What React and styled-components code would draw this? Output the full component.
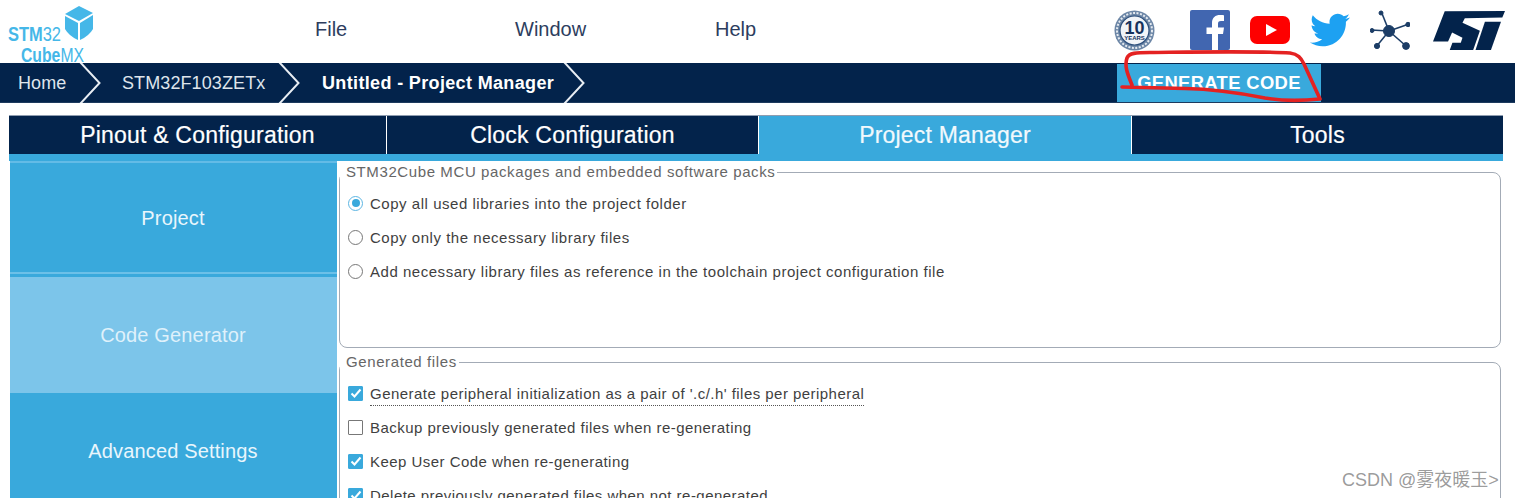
import React from "react";
import styled, { createGlobalStyle } from "styled-components";
import { FaTwitter } from "react-icons/fa";

const Global = createGlobalStyle`
  html, body { margin: 0; padding: 0; background: #fff; overflow: hidden; }
  * { box-sizing: border-box; }
`;

const Page = styled.div`
  position: relative;
  width: 1515px;
  height: 498px;
  overflow: hidden;
  font-family: "Liberation Sans", Arial, sans-serif;
  background: #fff;
`;

const Header = styled.header`
  height: 63px;
  display: flex;
  align-items: flex-start;
  padding-right: 10px;
`;

const LogoBox = styled.div`
  width: 315px;
  height: 63px;
  flex: none;
  display: flex;
  padding: 3px 0 0 7px;
`;

const Menu = styled.nav`
  display: flex;
  height: 59px;
  align-items: center;
`;

const MenuItem = styled.span`
  width: 200px;
  font-size: 20px;
  color: #2d3d5e;
`;

const Socials = styled.div`
  margin-left: auto;
  display: flex;
  align-items: center;
  height: 60px;
  gap: 20px;
`;

const BadgeWrap = styled.div`
  margin-right: 15px;
  display: flex;
`;

const StWrap = styled.div`
  margin-left: 3px;
  display: flex;
`;

const TwitterIcon = styled(FaTwitter)`
  font-size: 40px;
  color: #1da1f2;
`;

const NavBar = styled.div`
  height: 40px;
  background: #03234b;
  display: flex;
  align-items: stretch;
  border-bottom: 1px solid #1d3a5e;
`;

const Crumb = styled.div`
  display: flex;
  align-items: center;
  padding-top: 2px;
  color: ${(p) => (p.$active ? "#fff" : "#dfe5ec")};
  font-size: 18px;
  font-weight: ${(p) => (p.$active ? 700 : 400)};
  letter-spacing: ${(p) => (p.$active ? "0.35px" : "0.1px")};
  padding-left: ${(p) => p.$left}px;
  white-space: nowrap;
`;

const CrumbText = styled.span`
  width: ${(p) => p.$w}px;
`;

const Chevron = styled.svg`
  width: 22px;
  height: 40px;
  flex: none;
`;

const GenerateButton = styled.button`
  position: absolute;
  left: 1117px;
  top: 64px;
  width: 204px;
  height: 38px;
  border: none;
  background: #39a9dc;
  color: #fff;
  font: 700 18.4px "Liberation Sans", Arial, sans-serif;
  letter-spacing: 0.35px;
  padding: 0;
`;

const Tabs = styled.div`
  margin: 12px 12px 0 9px;
  display: grid;
  grid-template-columns: 377px 372px 373px 1fr;
  border-top: 1px solid #8f9db0;
  border-bottom: 7px solid #39a9dc;
  height: 46px;
`;

const Tab = styled.div`
  display: flex;
  align-items: center;
  justify-content: center;
  background: ${(p) => (p.$active ? "#39a9dc" : "#03234b")};
  color: ${(p) => (p.$active ? "#f2f9fd" : "#fff")};
  font-size: 23px;
  letter-spacing: 0.2px;
  -webkit-text-stroke: 0.2px currentColor;
  border-left: ${(p) => (p.$first ? "none" : "1px solid #fff")};
`;

const Body = styled.div`
  display: flex;
  height: 340px;
  padding-left: 10px;
`;

const Sidebar = styled.aside`
  width: 327px;
  flex: none;
  display: flex;
  flex-direction: column;
`;

const SideItem = styled.div`
  height: ${(p) => p.$h}px;
  flex: none;
  display: flex;
  align-items: center;
  justify-content: center;
  padding-right: 1px;
  background: ${(p) => (p.$active ? "#7cc5ea" : "#39a9dc")};
  color: ${(p) => (p.$active ? "#dff1fb" : "#e9f6fc")};
  font-size: 20px;
  letter-spacing: 0.15px;
  border-top: ${(p) => (p.$line ? "2px solid #63bbe6" : "none")};
  border-bottom: ${(p) => (p.$gap ? "3px solid #39a9dc" : "none")};
  box-shadow: ${(p) => (p.$gap ? "inset 0 -2px 0 #6cc0e8" : "none")};
`;

const Content = styled.main`
  flex: 1;
  padding: 0 14px 0 2px;
  margin-top: 1px;
  display: flex;
  flex-direction: column;
  gap: 4px;
`;

const Group = styled.fieldset`
  margin: 0;
  padding: 4px 0 0 8px;
  min-width: 0;
  height: ${(p) => p.$h}px;
  flex: none;
  border: 1.5px solid #a3abb6;
  border-radius: 8px;
`;

const Legend = styled.legend`
  margin-left: -8px;
  padding: 0 2px 0 6px;
  font-size: 15px;
  letter-spacing: 0.6px;
  line-height: 20px;
  color: #666;
`;

const Option = styled.div`
  height: 34px;
  display: flex;
  align-items: center;
  gap: 7px;
  font-size: 15px;
  letter-spacing: ${(p) => (p.$tight ? "0.46px" : "0.53px")};
  color: #3f3f3f;
  white-space: nowrap;
`;

const Radio = styled.span`
  width: 15px;
  height: 15px;
  flex: none;
  border-radius: 50%;
  border: 1.5px solid ${(p) => (p.$on ? "#5db6e3" : "#777")};
  background: #fff;
  display: flex;
  align-items: center;
  justify-content: center;
  &::after {
    content: "";
    display: ${(p) => (p.$on ? "block" : "none")};
    width: 8px;
    height: 8px;
    border-radius: 50%;
    background: #39a9dc;
  }
`;

const Check = styled.span`
  width: 15px;
  height: 15px;
  flex: none;
  border-radius: 1px;
  border: 1.5px solid ${(p) => (p.$on ? "#39a9dc" : "#777")};
  background: ${(p) => (p.$on ? "#39a9dc" : "#fff")};
  display: flex;
  align-items: center;
  justify-content: center;
`;

const Dotted = styled.span`
  border-bottom: 1px dotted #555;
  padding-bottom: 3px;
  margin-bottom: -5px;
`;

const Scribble = styled.svg`
  position: absolute;
  left: 0;
  top: 0;
  width: 1515px;
  height: 498px;
  pointer-events: none;
`;

const Watermark = styled.div`
  position: absolute;
  left: 1342px;
  top: 470px;
  font: 18px/20px "Liberation Sans", "Noto Sans CJK SC", sans-serif;
  color: rgba(90, 90, 90, 0.62);
  white-space: nowrap;
`;

const Logo = () => (
  <svg width="90" height="60" viewBox="0 0 90 60">
    <path d="M58 11 L72 3 L86 10 L72 18 Z" fill="#45b7e8" />
    <path d="M58 13 L71 20 L71 37 Q62 33 58 26 Z" fill="#45b7e8" />
    <path d="M86 12 L73 20 L73 37 Q82 33 86 26 Z" fill="#45b7e8" />
    <text x="1" y="38" fontFamily="Liberation Sans" fontSize="21" fill="#45b7e8" textLength="53" lengthAdjust="spacingAndGlyphs">
      <tspan fontWeight="700">STM</tspan>32
    </text>
    <text x="14" y="59" fontFamily="Liberation Sans" fontSize="21" fill="#45b7e8" textLength="63" lengthAdjust="spacingAndGlyphs">
      <tspan fontWeight="700">Cube</tspan>MX
    </text>
  </svg>
);

const Badge = () => (
  <svg width="41" height="41" viewBox="0 0 41 41">
    <circle cx="20.5" cy="20.5" r="20" fill="#6c86a6" />
    <circle cx="20.5" cy="20.5" r="17.500" fill="none" stroke="#e6ebf1" strokeWidth="2" strokeDasharray="2 1.500" />
    <circle cx="20.5" cy="20.5" r="14.500" fill="#f1f4f8" stroke="#2d4f7c" strokeWidth="1.200" />
    <text x="20.5" y="23.5" textAnchor="middle" fontFamily="Liberation Sans" fontWeight="700" fontSize="18" fill="#17325c">10</text>
    <text x="20.5" y="29.5" textAnchor="middle" fontFamily="Liberation Sans" fontWeight="700" fontSize="6" fill="#17325c">YEARS</text>
  </svg>
);

const Facebook = () => (
  <svg width="40" height="40" viewBox="0 0 40 40">
    <rect width="40" height="40" rx="2" fill="#4166b0" />
    <path d="M22 40 V24 H16.5 V17.5 H22 V13 C22 7.5 25.5 5 30 5 C32 5 33.5 5.2 34 5.3 V11 H31 C28.5 11 28 12.2 28 14 V17.5 H34 L33 24 H28 V40 Z" fill="#fff" />
  </svg>
);

const Youtube = () => (
  <svg width="40" height="40" viewBox="0 0 40 40">
    <rect x="0" y="6" width="40" height="28" rx="7" fill="#fe0000" />
    <path d="M16 14 L27 20 L16 26 Z" fill="#fff" />
  </svg>
);

const Network = () => (
  <svg width="40" height="40" viewBox="0 0 40 40" fill="#1c3d66" stroke="#1c3d66">
    <g strokeWidth="1.6">
      <line x1="19" y1="21" x2="11" y2="1" />
      <line x1="19" y1="21" x2="39" y2="14" />
      <line x1="19" y1="21" x2="1" y2="20" />
      <line x1="19" y1="21" x2="6" y2="37" />
      <line x1="19" y1="21" x2="36" y2="36" />
    </g>
    <circle cx="19" cy="21" r="5.5" />
    <circle cx="11" cy="3" r="2" />
    <circle cx="38" cy="14.5" r="2.2" />
    <circle cx="2" cy="20.5" r="2" />
    <circle cx="7" cy="36" r="2.6" />
    <circle cx="36" cy="36" r="3.4" />
  </svg>
);

const StLogo = () => (
  <svg width="72" height="39" viewBox="25 16 215 130" preserveAspectRatio="none" fill="#03234b">
    <path d="M60 17 L240 16 L232 38 L120 40 L113 55 L165 82 L145 146 L75 146 L83 122 L108 122 L113 105 L82 88 L70 118 L25 118 Z" />
    <path d="M180 52 L228 52 L198 146 L152 146 Z" />
  </svg>
);

const Tick = () => (
  <svg width="12" height="12" viewBox="0 0 12 12" fill="none">
    <path d="M1.5 6.5 L4.5 9.5 L10.5 2.5" stroke="#fff" strokeWidth="2" />
  </svg>
);

const ChevronMark = () => (
  <Chevron viewBox="0 0 22 40">
    <path d="M1 -1 L20.5 20 L1 41" fill="none" stroke="#e8edf3" strokeWidth="2" />
  </Chevron>
);

export default function App() {
  return (
    <Page>
      <Global />
      <Header>
        <LogoBox><Logo /></LogoBox>
        <Menu>
          <MenuItem>File</MenuItem>
          <MenuItem>Window</MenuItem>
          <MenuItem>Help</MenuItem>
        </Menu>
        <Socials>
          <BadgeWrap><Badge /></BadgeWrap>
          <Facebook />
          <Youtube />
          <TwitterIcon />
          <Network />
          <StWrap><StLogo /></StWrap>
        </Socials>
      </Header>

      <NavBar>
        <Crumb $left={18}><CrumbText $w={61}>Home</CrumbText></Crumb>
        <ChevronMark />
        <Crumb $left={21}><CrumbText $w={156}>STM32F103ZETx</CrumbText></Crumb>
        <ChevronMark />
        <Crumb $left={22} $active><CrumbText $w={241}>Untitled - Project Manager</CrumbText></Crumb>
        <ChevronMark />
      </NavBar>
      <GenerateButton>GENERATE CODE</GenerateButton>

      <Tabs>
        <Tab $first>Pinout &amp; Configuration</Tab>
        <Tab>Clock Configuration</Tab>
        <Tab $active>Project Manager</Tab>
        <Tab>Tools</Tab>
      </Tabs>

      <Body>
        <Sidebar>
          <SideItem $h={116} $line $gap>Project</SideItem>
          <SideItem $h={116} $active>Code Generator</SideItem>
          <SideItem $h={116}>Advanced Settings</SideItem>
        </Sidebar>
        <Content>
          <Group $h={186}>
            <Legend>STM32Cube MCU packages and embedded software packs</Legend>
            <Option><Radio $on />Copy all used libraries into the project folder</Option>
            <Option><Radio />Copy only the necessary library files</Option>
            <Option><Radio />Add necessary library files as reference in the toolchain project configuration file</Option>
          </Group>
          <Group $h={200}>
            <Legend>Generated files</Legend>
            <Option $tight><Check $on><Tick /></Check><Dotted>Generate peripheral initialization as a pair of '.c/.h' files per peripheral</Dotted></Option>
            <Option $tight><Check />Backup previously generated files when re-generating</Option>
            <Option $tight><Check $on><Tick /></Check>Keep User Code when re-generating</Option>
            <Option $tight><Check $on><Tick /></Check>Delete previously generated files when not re-generated</Option>
          </Group>
        </Content>
      </Body>

      <Scribble viewBox="0 0 1515 498">
        <path
          d="M1132 85 C1128 75 1124 66 1127 58 C1129 53 1136 52.500 1150 52.500 C1200 52 1260 51 1290 53 C1298 54 1301 58 1304 64 L1320 99 C1300 101 1282 101 1265 98 C1240 93 1215 89 1185 88.500 L1122 87"
          fill="none"
          stroke="#e42222"
          strokeWidth="3.600"
          strokeLinecap="round"
          strokeLinejoin="round"
        />
      </Scribble>
      <Watermark>CSDN @雾夜暖玉&gt;</Watermark>
    </Page>
  );
}
